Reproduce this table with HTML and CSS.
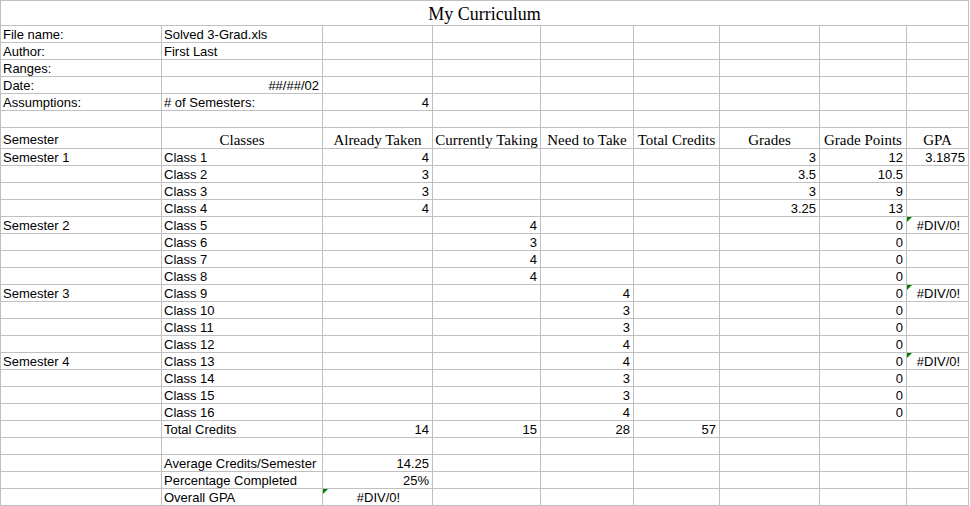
FILE: index.html
```html
<!DOCTYPE html>
<html>
<head>
<meta charset="utf-8">
<title>My Curriculum</title>
<link rel="stylesheet" href="styles.css">
</head>
<body>
<div class="sheet">
  <div class="c title">My Curriculum</div>

  <div class="c">File name:</div><div class="c">Solved 3-Grad.xls</div><div class="c"></div><div class="c"></div><div class="c"></div><div class="c"></div><div class="c"></div><div class="c"></div><div class="c"></div>
  <div class="c">Author:</div><div class="c">First Last</div><div class="c"></div><div class="c"></div><div class="c"></div><div class="c"></div><div class="c"></div><div class="c"></div><div class="c"></div>
  <div class="c">Ranges:</div><div class="c"></div><div class="c"></div><div class="c"></div><div class="c"></div><div class="c"></div><div class="c"></div><div class="c"></div><div class="c"></div>
  <div class="c">Date:</div><div class="c r">##/##/02</div><div class="c"></div><div class="c"></div><div class="c"></div><div class="c"></div><div class="c"></div><div class="c"></div><div class="c"></div>
  <div class="c">Assumptions:</div><div class="c"># of Semesters:</div><div class="c r">4</div><div class="c"></div><div class="c"></div><div class="c"></div><div class="c"></div><div class="c"></div><div class="c"></div>
  <div class="c"></div><div class="c"></div><div class="c"></div><div class="c"></div><div class="c"></div><div class="c"></div><div class="c"></div><div class="c"></div><div class="c"></div>

  <div class="c h">Semester</div><div class="c h s">Classes</div><div class="c h s">Already Taken</div><div class="c h s">Currently Taking</div><div class="c h s">Need to Take</div><div class="c h s">Total Credits</div><div class="c h s">Grades</div><div class="c h s">Grade Points</div><div class="c h s">GPA</div>

  <div class="c">Semester 1</div><div class="c">Class 1</div><div class="c r">4</div><div class="c"></div><div class="c"></div><div class="c"></div><div class="c r">3</div><div class="c r">12</div><div class="c r">3.1875</div>
  <div class="c"></div><div class="c">Class 2</div><div class="c r">3</div><div class="c"></div><div class="c"></div><div class="c"></div><div class="c r">3.5</div><div class="c r">10.5</div><div class="c"></div>
  <div class="c"></div><div class="c">Class 3</div><div class="c r">3</div><div class="c"></div><div class="c"></div><div class="c"></div><div class="c r">3</div><div class="c r">9</div><div class="c"></div>
  <div class="c"></div><div class="c">Class 4</div><div class="c r">4</div><div class="c"></div><div class="c"></div><div class="c"></div><div class="c r">3.25</div><div class="c r">13</div><div class="c"></div>

  <div class="c">Semester 2</div><div class="c">Class 5</div><div class="c"></div><div class="c r">4</div><div class="c"></div><div class="c"></div><div class="c"></div><div class="c r">0</div><div class="c m flag">#DIV/0!</div>
  <div class="c"></div><div class="c">Class 6</div><div class="c"></div><div class="c r">3</div><div class="c"></div><div class="c"></div><div class="c"></div><div class="c r">0</div><div class="c"></div>
  <div class="c"></div><div class="c">Class 7</div><div class="c"></div><div class="c r">4</div><div class="c"></div><div class="c"></div><div class="c"></div><div class="c r">0</div><div class="c"></div>
  <div class="c"></div><div class="c">Class 8</div><div class="c"></div><div class="c r">4</div><div class="c"></div><div class="c"></div><div class="c"></div><div class="c r">0</div><div class="c"></div>

  <div class="c">Semester 3</div><div class="c">Class 9</div><div class="c"></div><div class="c"></div><div class="c r">4</div><div class="c"></div><div class="c"></div><div class="c r">0</div><div class="c m flag">#DIV/0!</div>
  <div class="c"></div><div class="c">Class 10</div><div class="c"></div><div class="c"></div><div class="c r">3</div><div class="c"></div><div class="c"></div><div class="c r">0</div><div class="c"></div>
  <div class="c"></div><div class="c">Class 11</div><div class="c"></div><div class="c"></div><div class="c r">3</div><div class="c"></div><div class="c"></div><div class="c r">0</div><div class="c"></div>
  <div class="c"></div><div class="c">Class 12</div><div class="c"></div><div class="c"></div><div class="c r">4</div><div class="c"></div><div class="c"></div><div class="c r">0</div><div class="c"></div>

  <div class="c">Semester 4</div><div class="c">Class 13</div><div class="c"></div><div class="c"></div><div class="c r">4</div><div class="c"></div><div class="c"></div><div class="c r">0</div><div class="c m flag">#DIV/0!</div>
  <div class="c"></div><div class="c">Class 14</div><div class="c"></div><div class="c"></div><div class="c r">3</div><div class="c"></div><div class="c"></div><div class="c r">0</div><div class="c"></div>
  <div class="c"></div><div class="c">Class 15</div><div class="c"></div><div class="c"></div><div class="c r">3</div><div class="c"></div><div class="c"></div><div class="c r">0</div><div class="c"></div>
  <div class="c"></div><div class="c">Class 16</div><div class="c"></div><div class="c"></div><div class="c r">4</div><div class="c"></div><div class="c"></div><div class="c r">0</div><div class="c"></div>

  <div class="c"></div><div class="c">Total Credits</div><div class="c r">14</div><div class="c r">15</div><div class="c r">28</div><div class="c r">57</div><div class="c"></div><div class="c"></div><div class="c"></div>
  <div class="c"></div><div class="c"></div><div class="c"></div><div class="c"></div><div class="c"></div><div class="c"></div><div class="c"></div><div class="c"></div><div class="c"></div>
  <div class="c"></div><div class="c">Average Credits/Semester</div><div class="c r">14.25</div><div class="c"></div><div class="c"></div><div class="c"></div><div class="c"></div><div class="c"></div><div class="c"></div>
  <div class="c"></div><div class="c">Percentage Completed</div><div class="c r">25%</div><div class="c"></div><div class="c"></div><div class="c"></div><div class="c"></div><div class="c"></div><div class="c"></div>
  <div class="c"></div><div class="c">Overall GPA</div><div class="c m flag">#DIV/0!</div><div class="c"></div><div class="c"></div><div class="c"></div><div class="c"></div><div class="c"></div><div class="c"></div>
</div>
</body>
</html>
```

FILE: styles.css
```css
html, body {
  margin: 0;
  padding: 0;
  background: #ffffff;
}

.sheet {
  display: grid;
  grid-template-columns: 161px 161px 110px 108px 93px 86px 100px 87px 62px;
  grid-template-rows: 25px repeat(6, 17px) 21px;
  grid-auto-rows: 17px;
  width: max-content;
  border-left: 1px solid #c0c0c0;
  border-top: 1px solid #c0c0c0;
  font-family: "Liberation Sans", Arial, sans-serif;
  font-size: 13px;
  color: #000000;
}

.c {
  position: relative;
  box-sizing: border-box;
  border-right: 1px solid #c0c0c0;
  border-bottom: 1px solid #c0c0c0;
  padding: 1px 3px 0 2px;
  line-height: 16px;
  white-space: nowrap;
  text-align: left;
}

.title {
  grid-column: 1 / -1;
  font-family: "Liberation Serif", "Times New Roman", serif;
  font-size: 18px;
  line-height: 24px;
  text-align: center;
  padding: 1px 0 0 0;
}

.h {
  padding-top: 4px;
}

.s {
  font-family: "Liberation Serif", "Times New Roman", serif;
  font-size: 15px;
  text-align: center;
  padding-left: 0;
  padding-right: 0;
}

.r {
  text-align: right;
}

.m {
  text-align: center;
  padding-left: 2px;
  padding-right: 0;
}

.flag::before {
  content: "";
  position: absolute;
  left: 0;
  top: 0;
  width: 0;
  height: 0;
  border-top: 5px solid #008000;
  border-right: 5px solid transparent;
}
```
